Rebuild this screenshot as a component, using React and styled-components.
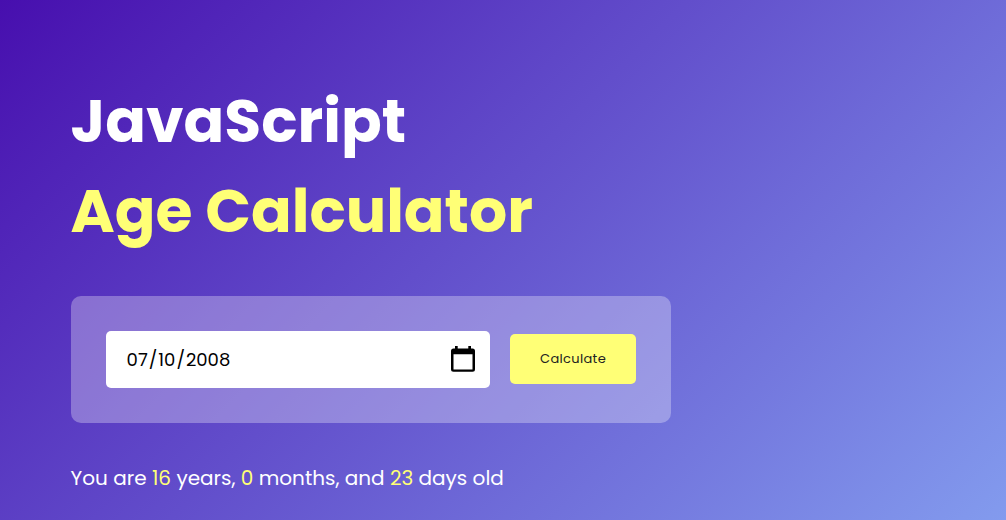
import React from "react";
import styled, { createGlobalStyle } from "styled-components";

const GlobalStyle = createGlobalStyle`
  *, *::before, *::after { box-sizing: border-box; margin: 0; padding: 0; }
  body {
    font-family: Poppins, Inter, sans-serif;
    font-feature-settings: "cv11";
    overflow: hidden;
  }
`;

const Page = styled.main`
  height: 520px;
  padding: 76px 70.6px 0;
  background: linear-gradient(135deg, #4203a9, #90bafc) -66px -61px / 1366px 625px no-repeat;
`;

const Title = styled.h1`
  font-size: 60px;
  font-weight: 700;
  line-height: 90px;
  color: #fff;
`;

const TitleLine = styled.span`
  display: block;
  white-space: nowrap;
  color: ${(p) => (p.$accent ? "#ffff76" : "#fff")};
`;

const Panel = styled.section`
  display: flex;
  align-items: center;
  gap: 20px;
  width: 600px;
  height: 127px;
  margin-top: 40px;
  padding: 0 35px;
  border-radius: 10px;
  background: rgba(255, 255, 255, 0.3);
`;

const DateField = styled.div`
  display: flex;
  align-items: center;
  justify-content: space-between;
  width: 384px;
  height: 57px;
  padding: 0 14.6px 0 20px;
  border-radius: 5px;
  background: #fff;
  color: #000;
  font-size: 18px;
`;

const DatePart = styled.span`
  padding: 0 1px;
`;

const CalendarIcon = styled.svg`
  display: block;
  width: 24px;
  height: 26px;
  margin-bottom: 1px;
`;

const Button = styled.button`
  width: 126px;
  height: 50px;
  margin-bottom: 1px;
  padding: 0 0 1px 1px;
  border: 0;
  border-radius: 5px;
  background: #ffff76;
  color: #222;
  font-family: inherit;
  font-size: 13px;
  font-weight: 400;
  letter-spacing: 0.33px;
`;

const Result = styled.p`
  margin-top: 40px;
  font-size: 20px;
  line-height: 30px;
  color: #fff;
  white-space: nowrap;
`;

const Count = styled.span`
  color: #ffff76;
`;

export default function App() {
  return (
    <>
      <GlobalStyle />
      <Page>
        <Title>
          <TitleLine>JavaScript</TitleLine>
          <TitleLine $accent>Age Calculator</TitleLine>
        </Title>
        <Panel>
          <DateField>
            <span>
              <DatePart>07</DatePart>/<DatePart>10</DatePart>/<DatePart>2008</DatePart>
            </span>
            <CalendarIcon viewBox="0 0 24 26" aria-hidden="true">
              <path
                fillRule="evenodd"
                d="M4 0h2.7v2.4h10.6V0H20v2.4h1.5A2.5 2.5 0 0 1 24 4.9v18.4a2.5 2.5 0 0 1-2.5 2.5h-19A2.5 2.5 0 0 1 0 23.3V4.9a2.5 2.5 0 0 1 2.5-2.5H4zM2.5 8.2v15.2h19V8.2z"
              />
            </CalendarIcon>
          </DateField>
          <Button>Calculate</Button>
        </Panel>
        <Result>
          You are <Count>16</Count> years, <Count>0</Count> months, and <Count>23</Count> days old
        </Result>
      </Page>
    </>
  );
}
